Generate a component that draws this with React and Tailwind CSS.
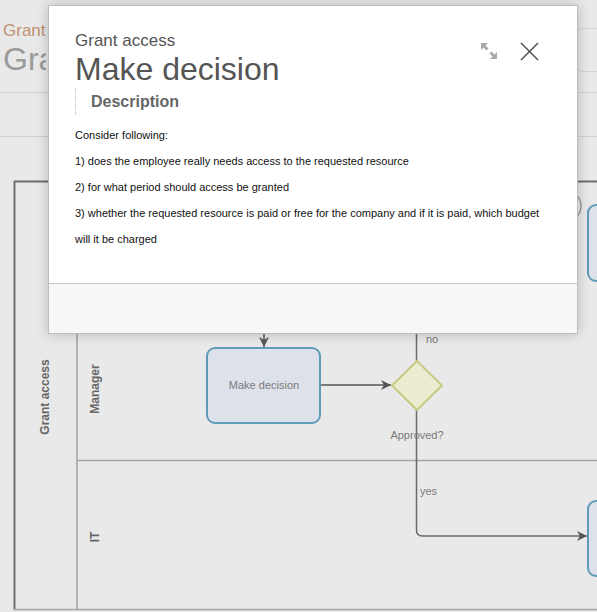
import React from 'react';

const lines = [
  'Consider following:',
  '1) does the employee really needs access to the requested resource',
  '2) for what period should access be granted',
  '3) whether the requested resource is paid or free for the company and if it is paid, which budget',
  'will it be charged',
];

function ExpandIcon() {
  return (
    <svg width="18" height="18" viewBox="0 0 18 18" fill="#a8a8a8">
      <polygon points="1,1 8,1 5.5,3.5 8.5,6.5 6.5,8.5 3.5,5.5 1,8" />
      <polygon points="17,17 10,17 12.5,14.5 9.5,11.5 11.5,9.5 14.5,12.5 17,10" />
    </svg>
  );
}

function CloseIcon() {
  return (
    <svg width="19" height="19" viewBox="0 0 19 19" stroke="#555" strokeWidth="1.6" fill="none">
      <line x1="1" y1="1" x2="18" y2="18" />
      <line x1="18" y1="1" x2="1" y2="18" />
    </svg>
  );
}

function Diagram() {
  const label = { fontFamily: '"Liberation Sans", Arial, sans-serif', fontSize: 11, fill: '#7a7a7a' };
  const lane = { fontFamily: '"Liberation Sans", Arial, sans-serif', fontSize: 12, fontWeight: 700, fill: '#666' };
  return (
    <svg width="597" height="475" viewBox="0 137 597 475" className="block">
      <defs>
        <marker id="arr" viewBox="0 0 10 10" refX="10" refY="5" markerWidth="10" markerHeight="10" markerUnits="userSpaceOnUse" orient="auto">
          <path d="M0,0 L10,5 L0,10 L3,5 Z" fill="#555" />
        </marker>
      </defs>
      {/* pool */}
      <line x1="14.5" y1="181" x2="14.5" y2="610" stroke="#6e6e6e" strokeWidth="2" />
      <line x1="14" y1="181.5" x2="597" y2="181.5" stroke="#6e6e6e" strokeWidth="2" />
      <line x1="14" y1="609.5" x2="597" y2="609.5" stroke="#a5a5a5" strokeWidth="1.5" />
      <line x1="77" y1="181" x2="77" y2="610" stroke="#a0a0a0" strokeWidth="1.5" />
      <line x1="77" y1="460.5" x2="597" y2="460.5" stroke="#a5a5a5" strokeWidth="1.5" />
      <text transform="translate(49 397) rotate(-90)" textAnchor="middle" style={lane}>Grant access</text>
      <text transform="translate(99 389) rotate(-90)" textAnchor="middle" style={lane}>Manager</text>
      <text transform="translate(99 537) rotate(-90)" textAnchor="middle" style={lane}>IT</text>

      {/* start event (partially hidden) and top-right task */}
      <circle cx="565" cy="206" r="16" fill="#eee" stroke="#9a9a9a" strokeWidth="1.5" />
      <rect x="588" y="205" width="40" height="76" rx="8" fill="#dde1ea" stroke="#5e9bb8" strokeWidth="2" />

      {/* flow into task */}
      <line x1="264" y1="300" x2="264" y2="347" stroke="#555" strokeWidth="1.5" markerEnd="url(#arr)" />
      <rect x="207" y="348" width="113" height="75" rx="8" fill="#dde1ea" stroke="#5e9bb8" strokeWidth="2" />
      <text x="264" y="389" textAnchor="middle" style={label}>Make decision</text>

      <line x1="321" y1="385" x2="391" y2="385" stroke="#555" strokeWidth="1.5" markerEnd="url(#arr)" />

      {/* gateway */}
      <line x1="416.5" y1="300" x2="416.5" y2="361" stroke="#6a6a6a" strokeWidth="1.5" />
      <text x="426" y="343" textAnchor="start" style={label}>no</text>
      <path d="M416.5,410 L416.5,530 Q416.5,536 422.5,536 L587,536" fill="none" stroke="#6a6a6a" strokeWidth="1.5" markerEnd="url(#arr)" />
      <polygon points="417,361 442,385.5 417,410 392,385.5" fill="#ececd0" stroke="#c9c985" strokeWidth="2" />
      <text x="417" y="439" textAnchor="middle" style={label}>Approved?</text>
      <text x="420" y="495" textAnchor="start" style={label}>yes</text>

      <rect x="588" y="501" width="40" height="75" rx="8" fill="#dde1ea" stroke="#5e9bb8" strokeWidth="2" />
    </svg>
  );
}

export default function App() {
  return (
    <div className="relative w-[597px] h-[612px] overflow-hidden bg-[#e9e9e9] font-['Liberation_Sans',Arial,sans-serif]">
      {/* page header behind the dialog */}
      <div className="h-[93px] border-b border-[#d2d2d2] flex justify-between">
        <div className="pl-[3px] pt-[21px] w-[46px] overflow-hidden whitespace-nowrap">
          <div className="text-[17px] leading-[20px] text-[#c09272]">Grant access</div>
          <div className="text-[32px] leading-[36px] text-[#9b9b9b]">Grant access</div>
        </div>
        <div className="mt-[28px] w-[40px] h-[44px] -mr-[20px] rounded-[5px] border border-[#d4d4d4]" />
      </div>
      <div className="h-[44px] border-b border-[#d2d2d2]" />
      <Diagram />

      {/* modal */}
      <div className="absolute left-[48px] top-[5px] w-[530px] h-[329px] bg-white border border-[#bdbdbd] shadow-[0_0_12px_rgba(0,0,0,0.22)] flex flex-col">
        <div className="flex-1 pl-[26px] pr-[38px] pt-[25px]">
          <div className="flex justify-between">
            <div>
              <div className="text-[17px] leading-[20px] text-[#555]">Grant access</div>
              <div className="text-[32px] leading-[36px] text-[#555]">Make decision</div>
            </div>
            <div className="flex items-start gap-[22px] pt-[11px]">
              <ExpandIcon />
              <CloseIcon />
            </div>
          </div>
          <div className="mt-[1px] h-[27px] border-l border-dotted border-[#bbb] pl-[15px] flex items-center">
            <span className="text-[16px] font-bold text-[#666]">Description</span>
          </div>
          <div className="mt-[7px] text-[11px] leading-[26px] text-[#111] whitespace-nowrap">
            {lines.map((l) => (
              <div key={l}>{l}</div>
            ))}
          </div>
        </div>
        <div className="h-[50px] border-t border-[#c8c8c8] bg-[#f7f7f7]" />
      </div>
    </div>
  );
}
